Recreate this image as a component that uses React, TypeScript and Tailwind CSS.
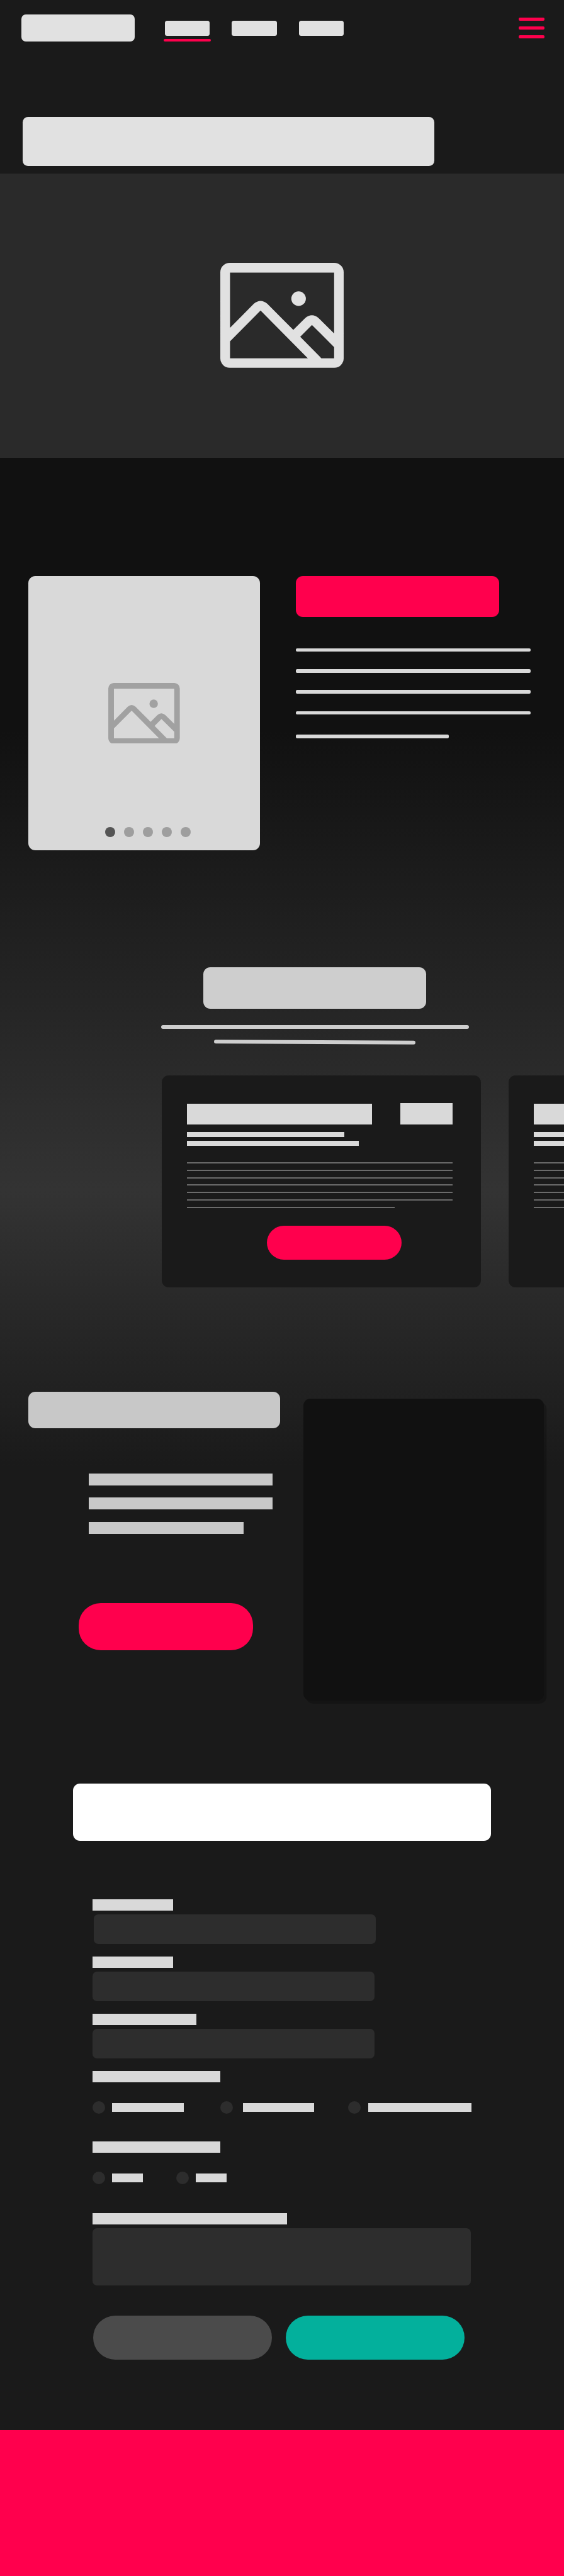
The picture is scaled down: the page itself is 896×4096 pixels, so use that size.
function ImageIcon({ className }: { className: string }) {
  return (
    <svg viewBox="180 113 840 715" className={className} fill="currentColor" aria-hidden="true">
      <path
        fillRule="evenodd"
        d="M244 113H956A64 64 0 0 1 1020 177V764A64 64 0 0 1 956 828H244A64 64 0 0 1 180 764V177A64 64 0 0 1 244 113Z
           M246 179V556L408 392Q454 352 500 392L677 570L757 490Q804 450 850 490L955 594V179Z
           M246 648V763H776L454 438Z
           M724 617L868 763H955V687L804 536Z"
      />
      <circle cx="713" cy="357" r="49.5" />
    </svg>
  );
}

function Header() {
  return (
    <header className="flex h-[186.2px] items-start pl-[34.3px] pr-[31.4px]">
      <div className="mt-[22.7px] h-[43.4px] w-[180px] rounded-[7px] bg-[#e1e1e1]" />
      <nav className="ml-[45.4px] mt-[32.9px] flex gap-[30.9px]">
        <div className="flex w-[75.6px] flex-col items-center gap-[4.9px]">
          <div className="h-[24.5px] w-[71.4px] rounded-[3.5px] bg-[#e1e1e1]" />
          <div className="h-[4.2px] w-full rounded-full bg-[#ff004d]" />
        </div>
        <div className="flex w-[75.6px] flex-col items-center">
          <div className="h-[24.5px] w-[71.4px] rounded-[3.5px] bg-[#e1e1e1]" />
        </div>
        <div className="flex w-[75.6px] flex-col items-center">
          <div className="h-[24.5px] w-[71.4px] rounded-[3.5px] bg-[#e1e1e1]" />
        </div>
      </nav>
      <div className="ml-auto mt-[28px] flex w-[40.6px] flex-col gap-[9.1px]">
        <div className="h-[4.9px] rounded-[2px] bg-[#ff004d]" />
        <div className="h-[4.9px] rounded-[2px] bg-[#ff004d]" />
        <div className="h-[4.9px] rounded-[2px] bg-[#ff004d]" />
      </div>
    </header>
  );
}

function Hero() {
  return (
    <section>
      <div className="ml-[36.4px] h-[77.7px] w-[653.8px] rounded-[8.4px] bg-[#e1e1e1]" />
      <div className="mt-[11.9px] flex h-[452.2px] justify-center bg-[#2a2a2a] pt-[142.6px]">
        <ImageIcon className="h-[166.8px] w-[196px] text-[#e1e1e1]" />
      </div>
    </section>
  );
}

function Gallery() {
  return (
    <section className="flex items-start pl-[44.6px] pt-[188.4px]">
      <div className="flex h-[435.4px] w-[368.4px] flex-col items-center rounded-[11.2px] bg-[#d9d9d9] pt-[169.4px]">
        <ImageIcon className="h-[96.7px] w-[113.7px] text-[#a1a1a1]" />
        <div className="ml-[12.6px] mt-[132.2px] flex gap-[14px]">
          <div className="size-[16.1px] rounded-full bg-[#555555]" />
          <div className="size-[16.1px] rounded-full bg-[#9e9e9e]" />
          <div className="size-[16.1px] rounded-full bg-[#9e9e9e]" />
          <div className="size-[16.1px] rounded-full bg-[#9e9e9e]" />
          <div className="size-[16.1px] rounded-full bg-[#9e9e9e]" />
        </div>
      </div>
      <div className="ml-[57.4px] w-[373.1px]">
        <div className="h-[65.1px] w-[322.7px] rounded-[11.2px] bg-[#ff004d]" />
        <div className="mt-[49.1px] h-[5.6px] rounded-[2.1px] bg-[#d9d9d9]" />
        <div className="mt-[28.2px] h-[5.6px] rounded-[2.1px] bg-[#d9d9d9]" />
        <div className="mt-[27.2px] h-[5.6px] rounded-[2.1px] bg-[#d9d9d9]" />
        <div className="mt-[28px] h-[5.6px] rounded-[2.1px] bg-[#d9d9d9]" />
        <div className="mt-[32px] h-[5.6px] w-[242.2px] rounded-[2.1px] bg-[#d9d9d9]" />
      </div>
    </section>
  );
}

function OfferCard() {
  return (
    <article className="h-[336.7px] w-[506.8px] shrink-0 rounded-[11.2px] bg-[#1a1a1a] pl-[39.9px] pt-[43.9px]">
      <div className="flex w-[422.1px] items-end justify-between">
        <div className="h-[33.8px] w-[294.2px] bg-[#d9d9d9]" />
        <div className="h-[34.4px] w-[82.7px] bg-[#d9d9d9]" />
      </div>
      <div className="mt-[11.8px] h-[7.7px] w-[250.5px] bg-[#d9d9d9]" />
      <div className="mt-[6.3px] h-[7.7px] w-[273.6px] bg-[#d9d9d9]" />
      <div className="mt-[26.1px] w-[422.1px]">
        <div className="h-[2.1px] bg-[#6b6b6b]" />
        <div className="mt-[9.8px] h-[2.1px] bg-[#6b6b6b]" />
        <div className="mt-[9.8px] h-[2.1px] bg-[#6b6b6b]" />
        <div className="mt-[9.1px] h-[2.1px] bg-[#6b6b6b]" />
        <div className="mt-[9.8px] h-[2.1px] bg-[#6b6b6b]" />
        <div className="mt-[9.8px] h-[2.1px] bg-[#6b6b6b]" />
        <div className="mt-[10.5px] h-[2.1px] w-[330.4px] bg-[#6b6b6b]" />
      </div>
      <div className="ml-[126.7px] mt-[27.8px] h-[53.6px] w-[214px] rounded-full bg-[#ff004d]" />
    </article>
  );
}

function Offers() {
  return (
    <section className="pt-[186.2px]">
      <div className="ml-[255.6px] flex w-[489.2px] flex-col items-center">
        <div className="h-[65.8px] w-[354.2px] rounded-[11.2px] bg-[#cecece]" />
        <div className="mt-[26.6px] h-[5.6px] w-full rounded-full bg-[#cecece]" />
        <div className="mt-[18.3px] h-[5.6px] w-[319.9px] rotate-[0.25deg] rounded-full bg-[#cecece]" />
      </div>
      <div className="mt-[50.3px] flex gap-[44.1px] overflow-hidden pl-[257px]">
        <OfferCard />
        <OfferCard />
      </div>
    </section>
  );
}

function Feature() {
  return (
    <section className="flex items-start pl-[44.6px] pt-[165.9px]">
      <div className="w-[400px]">
        <div className="h-[58.8px] rounded-[11.2px] bg-[#c8c8c8]" />
        <div className="ml-[96.6px] mt-[71.6px] h-[18.9px] w-[292px] bg-[#c8c8c8]" />
        <div className="ml-[96.6px] mt-[19.4px] h-[18.9px] w-[292px] bg-[#c8c8c8]" />
        <div className="ml-[96.6px] mt-[19.8px] h-[18.9px] w-[245.7px] bg-[#c8c8c8]" />
        <div className="ml-[80.5px] mt-[109.9px] h-[75.4px] w-[277.2px] rounded-[35px] bg-[#ff004d]" />
      </div>
      <div className="ml-[37.7px] mt-[11.2px] h-[480.2px] w-[381.6px] rounded-[11.2px] bg-[#111111] shadow-[4.2px_4.9px_0_rgba(0,0,0,0.2)]" />
    </section>
  );
}

function Booking() {
  return (
    <section className="pt-[132.4px]">
      <div className="ml-[115.6px] h-[91px] w-[664.9px] rounded-[11.2px] bg-white" />
      <form className="ml-[147px] mt-[92.4px] w-[602px]">
        <div className="h-[18.2px] w-[127.5px] bg-[#d9d9d9]" />
        <div className="ml-[2px] mt-[5.7px] h-[46.8px] w-[448px] rounded-[7px] bg-[#2d2d2d]" />
        <div className="mt-[20.4px] h-[18.2px] w-[127.5px] bg-[#d9d9d9]" />
        <div className="mt-[5.7px] h-[46.8px] w-[448px] rounded-[7px] bg-[#2d2d2d]" />
        <div className="mt-[20.4px] h-[18.2px] w-[165.4px] bg-[#d9d9d9]" />
        <div className="mt-[5.7px] h-[46.8px] w-[448px] rounded-[7px] bg-[#2d2d2d]" />

        <div className="mt-[20.2px] h-[18.2px] w-[203.1px] bg-[#d9d9d9]" />
        <div className="mt-[30px] flex items-center">
          <div className="size-[19.6px] rounded-full bg-[#2d2d2d]" />
          <div className="ml-[11.8px] mt-[0.6px] h-[14.7px] w-[113.4px] bg-[#d9d9d9]" />
          <div className="ml-[58.3px] size-[19.6px] rounded-full bg-[#2d2d2d]" />
          <div className="ml-[16px] mt-[0.6px] h-[14.7px] w-[113.4px] bg-[#d9d9d9]" />
          <div className="ml-[54.2px] size-[19.6px] rounded-full bg-[#2d2d2d]" />
          <div className="ml-[11.8px] mt-[0.6px] h-[14.7px] w-[164.4px] bg-[#d9d9d9]" />
        </div>

        <div className="mt-[44.1px] h-[18.2px] w-[203.1px] bg-[#d9d9d9]" />
        <div className="mt-[30.1px] flex items-center">
          <div className="size-[19.6px] rounded-full bg-[#2d2d2d]" />
          <div className="ml-[11.8px] mt-[0.6px] h-[14.7px] w-[48.3px] bg-[#d9d9d9]" />
          <div className="ml-[53.3px] size-[19.6px] rounded-full bg-[#2d2d2d]" />
          <div className="ml-[11.8px] mt-[0.6px] h-[14.7px] w-[48.3px] bg-[#d9d9d9]" />
        </div>

        <div className="mt-[46.4px] h-[18.2px] w-[309.2px] bg-[#d9d9d9]" />
        <div className="mt-[5.8px] h-[90.7px] w-[600.7px] rounded-[7px] bg-[#2d2d2d]" />

        <div className="ml-[1.4px] mt-[48.4px] flex gap-[22.4px]">
          <div className="h-[70px] w-[283.5px] rounded-[35px] bg-[#4b4b4b]" />
          <div className="h-[70px] w-[283.5px] rounded-[35px] bg-[#03b09c]" />
        </div>
      </form>
    </section>
  );
}

export default function App() {
  return (
    <div className="flex h-[4096px] w-[896px] flex-col overflow-hidden bg-[#1a1a1a] font-['Inter',sans-serif]">
      <Header />
      <Hero />
      <main className="h-[3135.6px] shrink-0 bg-[linear-gradient(180deg,#111111_434px,#333333_1165px,#1a1a1a_1603px)]">
        <Gallery />
        <Offers />
        <Feature />
        <Booking />
      </main>
      <footer className="grow bg-[#ff004d]" />
    </div>
  );
}
